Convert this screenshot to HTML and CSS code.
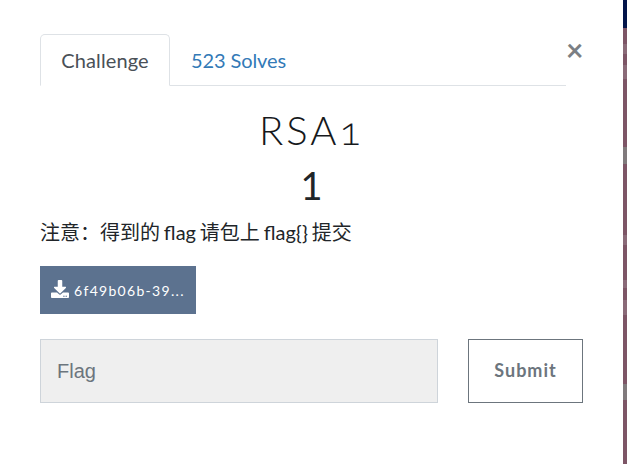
FILE: index.html
```html
<!DOCTYPE html>
<html lang="en">
<head>
  <meta charset="UTF-8" />
  <title>RSA1</title>
  <link rel="stylesheet" href="styles.css">
</head>
<body>
  <div class="page">
    <div class="modal">
      <div class="tabRow">
        <ul class="tabs">
          <li class="tab active">Challenge</li>
          <li class="tab">523 Solves</li>
        </ul>
        <button class="close">&times;</button>
      </div>
      <h2 class="name">RSA1</h2>
      <h3 class="value">1</h3>
      <p class="desc">注意：得到的 flag 请包上 flag{} 提交</p>
      <a class="file">
        <svg class="fileIcon" viewBox="0 0 512 512">
          <path fill="#fff" d="M216 0h80c13 0 24 11 24 24v168h88c18 0 27 21 14 34L270 378c-8 8-20 8-28 0L90 226c-13-13-4-34 14-34h88V24c0-13 11-24 24-24z"/>
          <path fill="#fff" d="M512 376v112c0 13-11 24-24 24H24c-13 0-24-11-24-24V376c0-13 11-24 24-24h147l49 49c20 20 52 20 72 0l49-49h147c13 0 24 11 24 24zM388 464c0-11-9-20-20-20s-20 9-20 20 9 20 20 20 20-9 20-20zm64 0c0-11-9-20-20-20s-20 9-20 20 9 20 20 20 20-9 20-20z"/>
        </svg>
        <span class="fileName">6f49b06b-39...</span>
      </a>
      <div class="flagRow">
        <input class="flagInput" type="text" placeholder="Flag">
        <button class="submit">Submit</button>
      </div>
    </div>
    <div class="backdrop">
      <div class="navBar"></div>
      <div class="dim">
        <span class="ghost g1"></span>
        <span class="ghost g2"></span>
        <span class="block b1"></span>
        <span class="ghost g3"></span>
        <span class="ghost g4"></span>
        <span class="ghost g5"></span>
        <span class="block b2"></span>
      </div>
    </div>
  </div>
</body>
</html>
```

FILE: styles.css
```css
html, body {
  margin: 0;
  height: 100%;
  overflow: hidden;
  background: #fff;
}
.page {
  display: flex;
  height: 464px;
}
.modal {
  width: 623px;
  flex: none;
  box-sizing: border-box;
  padding: 34px 0 0 40px;
  font-family: Lato, "Noto Sans CJK SC", sans-serif;
  color: #212529;
  background: #fff;
}
/* tabs */
.tabRow {
  display: flex;
  width: 543px;
  align-items: flex-start;
}
.tabs {
  display: flex;
  flex: none;
  width: 526px;
  box-sizing: border-box;
  height: 52px;
  margin: 0;
  padding: 0;
  list-style: none;
  border-bottom: 1px solid #dee2e6;
}
.tab {
  box-sizing: border-box;
  height: 52px;
  padding: 10px 19px 0 20px;
  font-size: 20px;
  line-height: 30px;
  letter-spacing: -0.1px;
  color: #337ab7;
  border: 1px solid transparent;
}
.tab.active {
  width: 130px;
  padding: 10px 0 0;
  text-align: center;
  letter-spacing: 0.1px;
  color: #495057;
  background: #fff;
  border-color: #dee2e6 #dee2e6 #fff;
  border-radius: 5px 5px 0 0;
}
.close {
  margin: -2px 0 0 auto;
  padding: 0;
  width: 17px;
  height: 34px;
  font-family: Lato, sans-serif;
  font-size: 30px;
  font-weight: 700;
  line-height: 34px;
  color: #7b7f84;
  background: none;
  border: none;
}
/* heading */
.name {
  margin: 20px 0 0;
  width: 543px;
  text-align: center;
  font-size: 40px;
  font-weight: 300;
  line-height: 48px;
  letter-spacing: 3px;
  color: #16191c;
  font-variant-numeric: oldstyle-nums;
}
.value {
  margin: 7px 0 0;
  width: 543px;
  text-align: center;
  font-size: 38px;
  font-weight: 400;
  line-height: 48px;
}
.desc {
  margin: 10px 0 0;
  font-size: 20px;
  line-height: 27px;
  word-spacing: -1.25px;
}
/* file button */
.file {
  display: flex;
  align-items: center;
  width: 156px;
  height: 48px;
  margin-top: 20px;
  box-sizing: border-box;
  padding-left: 11px;
  background: #5c728f;
  color: #fff;
}
.fileIcon {
  width: 18px;
  height: 18px;
  margin-right: 5px;
  margin-top: -3px;
}
.fileName {
  font-size: 14px;
  letter-spacing: 1.3px;
}
/* flag form */
.flagRow {
  display: flex;
  margin-top: 25px;
}
.flagInput {
  flex: none;
  width: 398px;
  height: 64px;
  box-sizing: border-box;
  padding: 0 16px;
  font-family: "Liberation Sans", Arial, sans-serif;
  font-size: 20px;
  background: #efefef;
  border: 1px solid #ced4da;
  border-radius: 0;
  outline: none;
}
.flagInput::placeholder {
  color: #6c757d;
  opacity: 1;
}
.submit {
  flex: none;
  width: 115px;
  height: 64px;
  margin-left: 30px;
  padding: 0 0 2px;
  box-sizing: border-box;
  font-family: Lato, sans-serif;
  font-size: 18px;
  font-weight: 700;
  letter-spacing: 1px;
  color: #6c757d;
  background: #fff;
  border: 1px solid #6c757d;
}
/* what shows of the page behind the modal */
.backdrop {
  flex: 1;
  display: flex;
  flex-direction: column;
}
.navBar {
  height: 28px;
  background: #03154a;
}
.dim {
  flex: 1;
  display: flex;
  flex-direction: column;
  background: #7d5566;
}
.ghost, .block {
  display: block;
  background: #8a6a78;
}
.block { background: #807a7c; }
.g1 { height: 10px; margin-top: 16px; }
.g2 { height: 14px; margin-top: 11px; }
.b1 { height: 17px; margin-top: 68px; }
.g3 { height: 10px; margin-top: 71px; }
.g4 { height: 8px; margin-top: 35px; }
.g5 { height: 15px; margin-top: 12px; }
.b2 { height: 16px; margin-top: 69px; }
```
